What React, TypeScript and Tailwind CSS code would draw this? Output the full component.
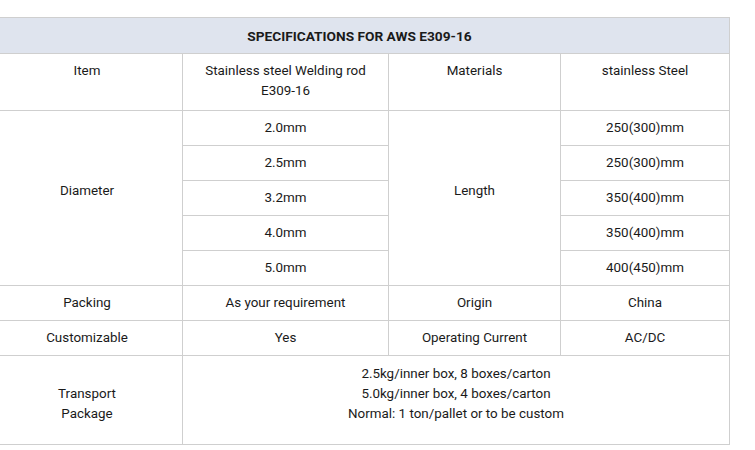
import React from "react";

const diameters = ["2.0mm", "2.5mm", "3.2mm", "4.0mm", "5.0mm"];
const lengths = ["250(300)mm", "250(300)mm", "350(400)mm", "350(400)mm", "400(450)mm"];

const cell = "border border-[#cfcfcf] text-center align-middle p-0";
// first column's text sits a little left of its centre
const first = `${cell} pr-[8px]`;

export default function App() {
  return (
    <div
      className="w-[755px] h-[450px] bg-white pt-[17px] text-[13.4px] leading-[20px] text-[#1a1a1a]"
      style={{ fontFamily: "Roboto, 'Liberation Sans', sans-serif" }}
    >
      <table className="table-fixed border-collapse w-[730px] -ml-px">
        <colgroup>
          <col className="w-[183px]" />
          <col className="w-[206px]" />
          <col className="w-[172px]" />
          <col className="w-[169px]" />
        </colgroup>
        <tbody>
          <tr className="h-[36px] bg-[#dfe4ee]">
            <td colSpan={4} className={`${cell} font-bold text-[13.7px] pr-[10px]`}>
              SPECIFICATIONS FOR AWS E309-16
            </td>
          </tr>
          <tr className="h-[57px]">
            <td className={`${first} align-top pt-[7px]`}>Item</td>
            <td className={`${cell} align-top pt-[7px]`}>
              Stainless steel Welding rod
              <br />
              E309-16
            </td>
            <td className={`${cell} align-top pt-[7px]`}>Materials</td>
            <td className={`${cell} align-top pt-[7px]`}>stainless Steel</td>
          </tr>
          {diameters.map((d, i) => (
            <tr key={i} className="h-[35px]">
              {i === 0 && (
                <td rowSpan={5} className={`${first} pb-[15px]`}>
                  Diameter
                </td>
              )}
              <td className={cell}>{d}</td>
              {i === 0 && (
                <td rowSpan={5} className={`${cell} pb-[15px]`}>
                  Length
                </td>
              )}
              <td className={cell}>{lengths[i]}</td>
            </tr>
          ))}
          <tr className="h-[35px]">
            <td className={first}>Packing</td>
            <td className={cell}>As your requirement</td>
            <td className={cell}>Origin</td>
            <td className={cell}>China</td>
          </tr>
          <tr className="h-[35px]">
            <td className={first}>Customizable</td>
            <td className={cell}>Yes</td>
            <td className={cell}>Operating Current</td>
            <td className={cell}>AC/DC</td>
          </tr>
          <tr className="h-[89px]">
            <td className={`${first} pt-[7px]`}>
              Transport
              <br />
              Package
            </td>
            <td colSpan={3} className={`${cell} pb-[13px]`}>
              2.5kg/inner box, 8 boxes/carton
              <br />
              5.0kg/inner box, 4 boxes/carton
              <br />
              Normal: 1 ton/pallet or to be custom
            </td>
          </tr>
        </tbody>
      </table>
    </div>
  );
}
